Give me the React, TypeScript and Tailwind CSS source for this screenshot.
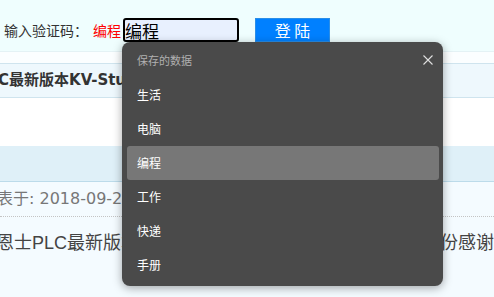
import React from "react";

const cjk = { fontFamily: '"Noto Sans CJK SC", "Noto Sans", sans-serif' };
const verd = { fontFamily: '"DejaVu Sans", "Noto Sans CJK SC", sans-serif' };
const arial = { fontFamily: '"Liberation Sans", "Noto Sans CJK SC", sans-serif' };

const items = ["生活", "电脑", "编程", "工作", "快递", "手册"];

export default function App() {
  return (
    <div className="relative w-[494px] h-[297px] overflow-hidden bg-[#f4fbff]" style={cjk}>
      {/* top form */}
      <div className="h-[51px] bg-[#effefe] flex items-start pt-[18px] pl-[4px]">
        <div className="h-[24px] flex items-center text-[14px] text-[#333] whitespace-nowrap">
          <span>输入验证码：</span>
          <span className="ml-[5px] text-[#ff0000]">编程</span>
        </div>
        <div className="ml-[2px] w-[116px] h-[24px] border-2 border-black rounded-[3px] bg-[#e8f0fe] flex items-center text-[17px] text-black leading-none">
          编程
        </div>
        <div className="ml-[16px] w-[75px] h-[24px] bg-[#0080ff] border border-[#2a8ee8] text-white text-[16px] flex items-center justify-center whitespace-pre leading-none">
          登 陆
        </div>
      </div>
      <div className="h-[12px] bg-[#fbfeff] border-t border-[#e4f2f5]" />
      <div className="h-[35px] bg-[#eef8fd] border-y border-[#cfe4ee] flex items-center overflow-hidden whitespace-nowrap">
        <span className="-ml-[2px] text-[15px] font-bold text-[#333]" style={verd}>
          C最新版本KV-Studio
        </span>
      </div>
      <div className="h-[48px] bg-white" />
      <div className="h-[36px] bg-[#dff0f8] border-b border-[#bcdbea]" />
      <div className="h-[35px] flex items-center border-b border-dotted border-[#c4c4c4] overflow-hidden whitespace-nowrap">
        <span className="-ml-[3px] text-[16px] text-[#777]" style={verd}>
          表于: 2018-09-24
        </span>
      </div>
      <div className="h-[52px] flex items-center overflow-hidden whitespace-nowrap text-[18px] text-[#444]" style={arial}>
        <span className="-ml-[4px] inline-block w-[431px]">恩士PLC最新版本KV-STUDIO</span>
        <span>一份感谢</span>
      </div>

      {/* dropdown */}
      <div className="absolute left-[122px] top-[42px] w-[321px] h-[244px] rounded-[8px] bg-[#4a4a4a] shadow-[0_2px_10px_rgba(0,0,0,0.35)] flex flex-col">
        <div className="h-[36px] flex items-center justify-between pl-[15px] pr-[9px]">
          <span className="text-[11px] text-[#b0b0b0]">保存的数据</span>
          <svg width="12" height="12" viewBox="0 0 12 12">
            <path d="M1.5 1.5 L10.5 10.5 M10.5 1.5 L1.5 10.5" stroke="#e0e0e0" strokeWidth="1.1" fill="none" />
          </svg>
        </div>
        <div className="flex flex-col pr-[4px] pl-[5px]">
          {items.map((t) => (
            <div
              key={t}
              className={
                t === "编程"
                  ? "h-[34px] flex items-center pl-[10px] text-[12px] text-white rounded-[3px] bg-[#777777]"
                  : "h-[34px] flex items-center pl-[10px] text-[12px] text-white"
              }
            >
              {t}
            </div>
          ))}
        </div>
      </div>
    </div>
  );
}
